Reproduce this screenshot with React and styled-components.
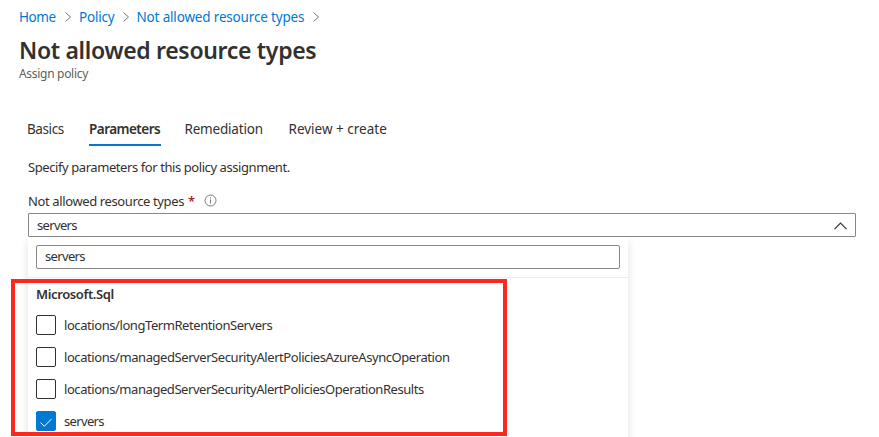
import React from "react";
import styled, { createGlobalStyle } from "styled-components";

const GlobalStyle = createGlobalStyle`
  * { box-sizing: border-box; }
  html, body { margin: 0; background: #fff; overflow: hidden; }
  body {
    font-family: "Noto Sans", "Open Sans", sans-serif;
    font-size: 13px;
    line-height: 18px;
    color: #323130;
  }
`;

const Page = styled.main`
  position: relative;
  width: 879px;
  height: 437px;
  overflow: hidden;
  display: flex;
  flex-direction: column;
  background: #fff;

  > * {
    flex-shrink: 0;
  }
`;

const Fit = styled.span`
  white-space: nowrap;
  letter-spacing: ${(p) => p.$ls || 0}px;
`;

const Breadcrumb = styled.nav`
  display: flex;
  align-items: center;
  height: 18px;
  margin: 8px 0 0 19px;
  font-size: 13.5px;
`;

const Crumb = styled.a`
  width: ${(p) => p.$w}px;
  color: #0078d4;
  white-space: nowrap;
  letter-spacing: ${(p) => p.$ls}px;
`;

const Separator = styled.svg`
  width: 8px;
  height: 12px;
  margin: 0 7px 0 8px;
  fill: none;
  stroke: #797775;
`;

const Title = styled.h1`
  margin: 8px 0 0 19px;
  height: 32px;
  font-size: 23px;
  line-height: 32px;
  font-weight: 600;
  white-space: nowrap;
  letter-spacing: ${(p) => p.$ls}px;
`;

const Subtitle = styled.div`
  margin: 0 0 0 19px;
  height: 16px;
  font-size: 12px;
  line-height: 16px;
  color: #605e5c;
`;

const Tabs = styled.div`
  display: flex;
  gap: 25px;
  margin: 38px 0 0 27px;
  height: 26px;
  font-size: 13.5px;
`;

const Tab = styled.div`
  width: ${(p) => p.$w}px;
  height: 26px;
  white-space: nowrap;
  font-weight: ${(p) => (p.$active ? 600 : 400)};
  border-bottom: 2px solid ${(p) => (p.$active ? "#0078d4" : "transparent")};
  letter-spacing: ${(p) => p.$ls}px;
`;

const Description = styled.p`
  margin: 12px 0 0 28px;
  height: 18px;
`;

const FieldLabel = styled.label`
  display: flex;
  align-items: center;
  margin: 16px 0 0 28px;
  height: 18px;
`;

const Required = styled.span`
  margin-left: 4px;
  width: 6px;
  font-weight: 600;
  color: #a4262c;
`;

const InfoIcon = styled.svg`
  width: 13px;
  height: 13px;
  margin: -1px 0 0 10px;
  fill: none;
  stroke: #797775;
`;

const ComboBox = styled.div`
  display: flex;
  align-items: center;
  justify-content: space-between;
  width: 828px;
  height: 24px;
  margin: 3px 0 0 28px;
  padding: 0 8px;
  border: 1px solid #8a8886;
  border-radius: 1px;
`;

const Chevron = styled.svg`
  width: 13px;
  height: 8px;
  margin-top: 1px;
  fill: none;
  stroke: #323130;
  stroke-width: 1.2;
`;

const Dropdown = styled.div`
  width: 600px;
  height: 220px;
  margin-left: 28px;
  box-shadow: 0 5px 9px rgba(0, 0, 0, 0.13);
  clip-path: inset(0 -20px -20px -20px);
`;

const SearchArea = styled.div`
  height: 41px;
  padding: 8px 8px 0;
  border-bottom: 1px solid #edebe9;
`;

const SearchBox = styled.div`
  display: flex;
  align-items: center;
  height: 24px;
  padding: 0 8px 2px;
  border: 1px solid #8a8886;
  border-radius: 2px;
`;

const GroupTitle = styled.div`
  height: 31px;
  padding: 7px 8px 0;
  font-weight: 600;
`;

const Option = styled.div`
  display: flex;
  align-items: center;
  gap: 8px;
  height: 32px;
  padding-left: 8px;
`;

const Checkbox = styled.span`
  display: flex;
  align-items: center;
  justify-content: center;
  width: 20px;
  height: 20px;
  border: 1px solid ${(p) => (p.$checked ? "#0078d4" : "#323130")};
  border-radius: 2px;
  background: ${(p) => (p.$checked ? "#0078d4" : "#fff")};
`;

const CheckMark = styled.svg`
  width: 14px;
  height: 12px;
  margin-top: 3px;
  fill: none;
  stroke: #fff;
`;

const Highlight = styled.div`
  position: absolute;
  left: 11px;
  top: 279px;
  width: 496px;
  height: 157px;
  border: 4px solid #ff261c;
  pointer-events: none;
`;

const crumbs = [
  { text: "Home", w: 37, ls: -0.4 },
  { text: "Policy", w: 34.5, ls: -0.2 },
  { text: "Not allowed resource types", w: 167.5, ls: -0.17 },
];

const tabs = [
  { text: "Basics", w: 37, ls: -0.4 },
  { text: "Parameters", w: 71.5, ls: -0.53, active: true },
  { text: "Remediation", w: 79, ls: -0.2 },
  { text: "Review + create", w: 99, ls: 0 },
];

const TabSpacer = styled(Tab)`
  margin-left: ${(p) => (p.$shift ? -1 : 0)}px;
`;

const options = [
  { text: "locations/longTermRetentionServers", ls: -0.43 },
  { text: "locations/managedServerSecurityAlertPoliciesAzureAsyncOperation", ls: -0.43 },
  { text: "locations/managedServerSecurityAlertPoliciesOperationResults", ls: -0.44 },
  { text: "servers", ls: -0.65, checked: true },
];

export default function App() {
  return (
    <>
      <GlobalStyle />
      <Page>
        <Breadcrumb>
          {crumbs.map((c) => (
            <React.Fragment key={c.text}>
              <Crumb $w={c.w} $ls={c.ls}>{c.text}</Crumb>
              <Separator viewBox="0 0 8 12"><path d="M1.5 1.5 6.5 6l-5 4.5" /></Separator>
            </React.Fragment>
          ))}
        </Breadcrumb>
        <Title $ls={-0.32}>Not allowed resource types</Title>
        <Subtitle><Fit $ls={-0.3}>Assign policy</Fit></Subtitle>
        <Tabs>
          {tabs.map((t, i) => (
            <TabSpacer key={t.text} $w={t.w} $ls={t.ls} $active={t.active} $shift={i === 2}>
              {t.text}
            </TabSpacer>
          ))}
        </Tabs>
        <Description><Fit $ls={-0.42}>Specify parameters for this policy assignment.</Fit></Description>
        <FieldLabel>
          <Fit $ls={-0.38}>Not allowed resource types</Fit>
          <Required>*</Required>
          <InfoIcon viewBox="0 0 13 13">
            <circle cx="6.5" cy="6.5" r="5.5" />
            <path d="M6.5 5.5v4M6.5 3.3v1.2" />
          </InfoIcon>
        </FieldLabel>
        <ComboBox>
          <Fit $ls={-0.65}>servers</Fit>
          <Chevron viewBox="0 0 13 8"><path d="M.5 7.2 6.5 1l6 6.2" /></Chevron>
        </ComboBox>
        <Dropdown>
          <SearchArea>
            <SearchBox><Fit $ls={-0.65}>servers</Fit></SearchBox>
          </SearchArea>
          <GroupTitle><Fit $ls={-0.38}>Microsoft.Sql</Fit></GroupTitle>
          {options.map((o) => (
            <Option key={o.text}>
              <Checkbox $checked={o.checked}>
                {o.checked && <CheckMark viewBox="0 0 14 12"><path d="m1.5 5.5 3.8 3.8L12.5 2" /></CheckMark>}
              </Checkbox>
              <Fit $ls={o.ls}>{o.text}</Fit>
            </Option>
          ))}
        </Dropdown>
        <Highlight />
      </Page>
    </>
  );
}
